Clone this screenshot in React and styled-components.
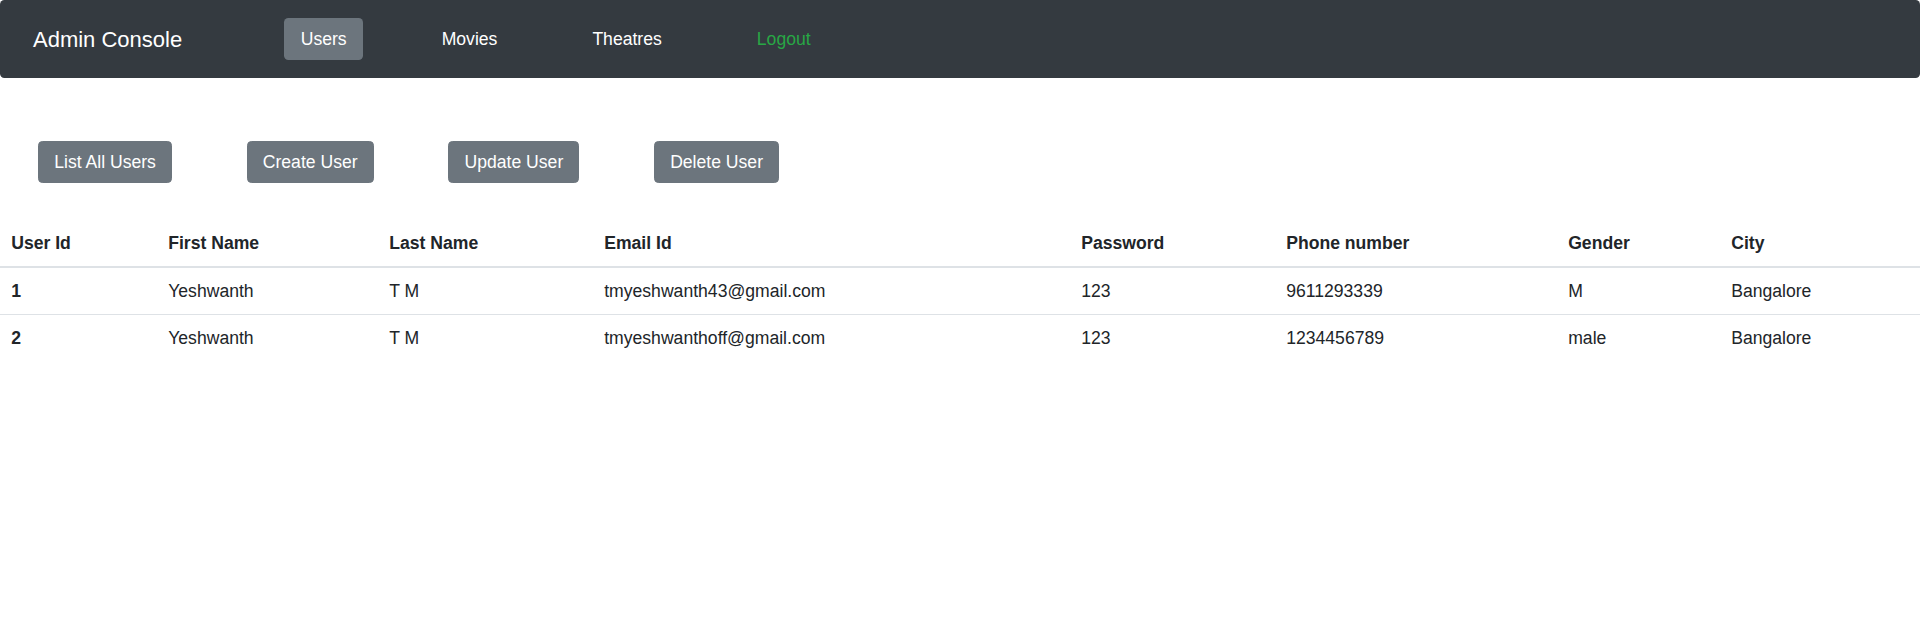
import React from "react";
import styled, { createGlobalStyle } from "styled-components";

const GlobalStyle = createGlobalStyle`
  html, body { margin: 0; padding: 0; background: #fff; }
  body {
    font-family: "Liberation Sans", Arial, Helvetica, sans-serif;
    font-size: 17.6px;
    line-height: 1.5;
    color: #212529;
  }
  * { box-sizing: border-box; }
`;

const Navbar = styled.nav`
  display: flex;
  align-items: center;
  height: 78px;
  padding-left: 33px;
  background: #343a40;
  border-radius: 4.4px;
`;

const Brand = styled.div`
  font-size: 22px;
  line-height: 1.5;
  color: #fff;
  margin-right: 102px;
  white-space: nowrap;
`;

const NavList = styled.div`
  display: flex;
  align-items: center;
  gap: 62px;
`;

const NavLink = styled.a`
  display: block;
  padding: 7.5px 16.5px;
  font-size: 17.6px;
  line-height: 27px;
  border-radius: 4.4px;
  text-decoration: none;
  cursor: pointer;
  color: ${(p) => (p.$variant === "logout" ? "#28a745" : "#fff")};
  background: ${(p) => (p.$active ? "#6c757d" : "transparent")};
`;

const ButtonRow = styled.div`
  display: flex;
  gap: 74.5px;
  padding-left: 38px;
  margin-top: 63px;
`;

const Button = styled.button`
  font-family: inherit;
  font-size: 17.6px;
  line-height: 26.4px;
  padding: 7px 15.2px;
  border: 1px solid #6c757d;
  border-radius: 4.4px;
  background: #6c757d;
  color: #fff;
  cursor: pointer;
  white-space: nowrap;
`;

const Table = styled.table`
  width: 100%;
  margin-top: 36.5px;
  border-collapse: collapse;
  table-layout: fixed;
`;

const Th = styled.th`
  text-align: left;
  font-weight: bold;
  padding: 10px 8.8px 10px 11.2px;
  border-bottom: 2px solid #dee2e6;
  vertical-align: bottom;
`;

const Td = styled.td`
  padding: 9.7px 8.8px 9.7px 11.2px;
  font-weight: ${(p) => (p.$strong ? "bold" : "normal")};
  border-top: ${(p) => (p.$first ? "none" : "1px solid #dee2e6")};
  vertical-align: top;
`;

const columns = [
  { label: "User Id", width: 157 },
  { label: "First Name", width: 221 },
  { label: "Last Name", width: 215 },
  { label: "Email Id", width: 477 },
  { label: "Password", width: 205 },
  { label: "Phone number", width: 282 },
  { label: "Gender", width: 163 },
  { label: "City", width: 200 },
];

const users = [
  ["1", "Yeshwanth", "T M", "tmyeshwanth43@gmail.com", "123", "9611293339", "M", "Bangalore"],
  ["2", "Yeshwanth", "T M", "tmyeshwanthoff@gmail.com", "123", "1234456789", "male", "Bangalore"],
];

export default function App() {
  return (
    <>
      <GlobalStyle />
      <Navbar>
        <Brand>Admin Console</Brand>
        <NavList>
          <NavLink $active>Users</NavLink>
          <NavLink>Movies</NavLink>
          <NavLink>Theatres</NavLink>
          <NavLink $variant="logout">Logout</NavLink>
        </NavList>
      </Navbar>
      <ButtonRow>
        <Button>List All Users</Button>
        <Button>Create User</Button>
        <Button>Update User</Button>
        <Button>Delete User</Button>
      </ButtonRow>
      <Table>
        <colgroup>
          {columns.map((c) => (
            <col key={c.label} style={{ width: c.width }} />
          ))}
        </colgroup>
        <thead>
          <tr>
            {columns.map((c) => (
              <Th key={c.label}>{c.label}</Th>
            ))}
          </tr>
        </thead>
        <tbody>
          {users.map((row, ri) => (
            <tr key={ri}>
              {row.map((cell, ci) => (
                <Td key={ci} $strong={ci === 0} $first={ri === 0}>
                  {cell}
                </Td>
              ))}
            </tr>
          ))}
        </tbody>
      </Table>
    </>
  );
}
